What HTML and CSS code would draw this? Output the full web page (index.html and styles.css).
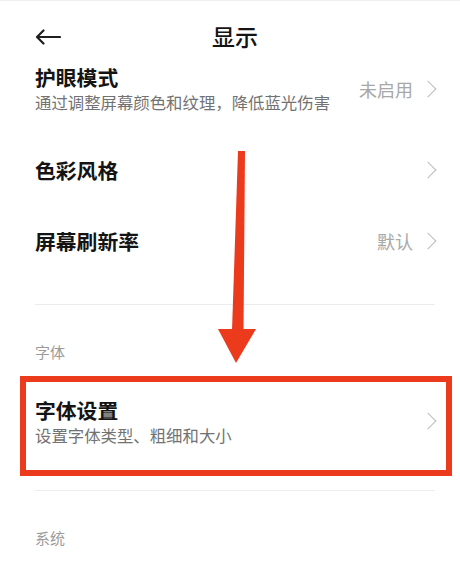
FILE: index.html
```html
<!DOCTYPE html>
<html lang="zh-CN">
<head>
    <meta charset="UTF-8">
    <meta name="viewport" content="width=device-width, initial-scale=1.0">
    <title>显示</title>
    <link rel="stylesheet" href="styles.css">
</head>
<body>
    <div class="page">
        <div class="header">
            <svg class="back" width="26" height="16" viewBox="0 0 26 16">
                <path d="M25 8H2M8.5 1.5L2 8l6.5 6.5" fill="none" stroke="#1f1f1f" stroke-width="2.2" stroke-linecap="round" stroke-linejoin="round"/>
            </svg>
            <h1>显示</h1>
        </div>

        <div class="row first">
            <div class="row-text">
                <div class="row-title">护眼模式</div>
                <div class="row-sub">通过调整屏幕颜色和纹理，降低蓝光伤害</div>
            </div>
            <span class="row-value">未启用</span>
            <span class="chevron"></span>
        </div>

        <div class="row">
            <div class="row-text">
                <div class="row-title">色彩风格</div>
            </div>
            <span class="chevron"></span>
        </div>

        <div class="row">
            <div class="row-text">
                <div class="row-title">屏幕刷新率</div>
            </div>
            <span class="row-value">默认</span>
            <span class="chevron"></span>
        </div>

        <div class="divider"></div>
        <div class="section-label">字体</div>

        <div class="row font-row">
            <div class="row-text">
                <div class="row-title">字体设置</div>
                <div class="row-sub">设置字体类型、粗细和大小</div>
            </div>
            <span class="chevron"></span>
            <!-- Markierung -->
            <div class="highlight"></div>
        </div>

        <div class="divider"></div>
        <div class="section-label">系统</div>

        <!-- Pfeil-Annotation -->
        <svg class="annotation" width="460" height="571" viewBox="0 0 460 571">
            <polygon points="238,150 245,150 243.5,330 232,330" fill="#ec3a1c"/>
            <polygon points="218,328 256,328 236,362" fill="#ec3a1c"/>
        </svg>
    </div>
</body>
</html>
```

FILE: styles.css
```css
:root {
    --title: #141414;
    --sub: #727272;
    --muted: #a8a8a8;
    --line: #ececec;
    --mark: #ec3a1c;
}

* {
    margin: 0;
    padding: 0;
    box-sizing: border-box;
}

body {
    background: #fff;
    font-family: "Noto Sans CJK SC", "Noto Sans", sans-serif;
}

.page {
    position: relative;
    width: 460px;
    height: 571px;
    overflow: hidden;
    border-top: 1px solid #f0f0f0;
}

.header {
    position: relative;
    height: 55px;
    padding: 19px 0 0 10px;
}

.header h1 {
    text-align: center;
    font-size: 23px;
    line-height: 32px;
    font-weight: 500;
    color: var(--title);
}

.back {
    position: absolute;
    left: 35px;
    top: 28px;
}

.row {
    display: flex;
    align-items: center;
    height: 71px;
    padding: 0 25px 0 35px;
}

.row.first {
    height: 78px;
    padding-top: 8px;
    padding-bottom: 21px;
}

.row-text {
    flex: 1;
    display: flex;
    flex-direction: column;
    gap: 1px;
}

.row-title {
    font-size: 20.8px;
    line-height: 26px;
    font-weight: 700;
    color: var(--title);
}

.row-sub {
    font-size: 16.4px;
    line-height: 22px;
    color: var(--sub);
}

.row-value {
    font-size: 18px;
    color: var(--muted);
    margin-right: 14px;
}

.chevron {
    width: 8px;
    height: 16px;
    position: relative;
}

.chevron::before {
    content: '';
    position: absolute;
    left: -5px;
    top: 2px;
    width: 11px;
    height: 11px;
    border-top: 1.6px solid #bdbdbd;
    border-right: 1.6px solid #bdbdbd;
    transform: rotate(45deg);
}

.divider {
    height: 1px;
    background: var(--line);
    margin: 28px 25px 0 35px;
}

.section-label {
    padding: 36px 0 0 35px;
    font-size: 15px;
    line-height: 22px;
    color: #9c9c9c;
}

.font-row {
    position: relative;
    height: 114px;
    padding-top: 2px;
}

.font-row + .divider {
    margin-top: 13px;
}

.highlight {
    position: absolute;
    left: 20px;
    right: 8px;
    top: 13px;
    bottom: 1px;
    border: 6px solid var(--mark);
}

.annotation {
    position: absolute;
    left: 0;
    top: 0;
    pointer-events: none;
}
```
